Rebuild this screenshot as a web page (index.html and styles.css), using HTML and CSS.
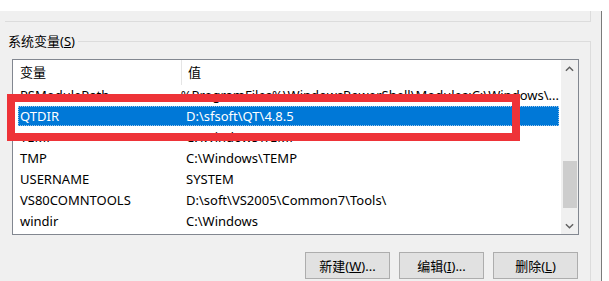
FILE: index.html
```html
<!DOCTYPE html>
<html lang="zh-CN">
<head>
  <meta charset="UTF-8">
  <title>环境变量</title>
  <link rel="stylesheet" href="styles.css">
</head>
<body>
  <div class="window">
    <!-- 上一个分组框的底边 -->
    <div class="prev-group"></div>

    <div class="group">
      <div class="legend-row">
        <span class="legend">系统变量(<u>S</u>)</span>
        <span class="legend-line"></span>
      </div>

      <div class="group-body">
        <div class="listview">
          <div class="list-main">
            <div class="list-head">
              <div class="col-name">变量</div>
              <div class="col-value">值</div>
            </div>
            <div class="row"><div class="col-name">PSModulePath</div><div class="col-value">%ProgramFiles%\WindowsPowerShell\Modules;C:\Windows\...</div></div>
            <div class="row selected"><div class="col-name">QTDIR</div><div class="col-value">D:\sfsoft\QT\4.8.5</div></div>
            <div class="row"><div class="col-name">TEMP</div><div class="col-value">C:\Windows\TEMP</div></div>
            <div class="row"><div class="col-name">TMP</div><div class="col-value">C:\Windows\TEMP</div></div>
            <div class="row"><div class="col-name">USERNAME</div><div class="col-value">SYSTEM</div></div>
            <div class="row"><div class="col-name">VS80COMNTOOLS</div><div class="col-value">D:\soft\VS2005\Common7\Tools\</div></div>
            <div class="row"><div class="col-name">windir</div><div class="col-value">C:\Windows</div></div>
          </div>

          <div class="scrollbar">
            <div class="arrow">
              <svg viewBox="0 0 10 6"><path d="M1 5 L5 1 L9 5" /></svg>
            </div>
            <div class="track">
              <div class="thumb"></div>
            </div>
            <div class="arrow">
              <svg viewBox="0 0 10 6"><path d="M1 1 L5 5 L9 1" /></svg>
            </div>
          </div>
        </div>

        <div class="buttons">
          <button class="btn">新建(<u>W</u>)...</button>
          <button class="btn">编辑(<u>I</u>)...</button>
          <button class="btn">删除(<u>L</u>)</button>
        </div>
      </div>
    </div>

    <!-- 标注框 -->
    <div class="highlight"></div>
  </div>
</body>
</html>
```

FILE: styles.css
```css
body {
  margin: 0;
  background: #fff;
  font-family: "Noto Sans", "Noto Sans CJK SC", sans-serif;
  font-size: 13px;
  color: #000;
  overflow: hidden;
}
.window {
  position: relative;
  margin-top: 11px;
  width: 601px;
  height: 270px;
  background: #f0f0f0;
  border-right: 1px solid #7a7a7a;
  overflow: hidden;
}
.prev-group {
  margin-left: 5px;
  width: 585px;
  height: 10px;
  border-bottom: 1px solid #dcdcdc;
  border-right: 1px solid #dcdcdc;
}
.group {
  width: 591px;
  margin-top: 11px;
}
.legend-row {
  display: flex;
  align-items: center;
  height: 16px;
}
.legend {
  padding: 0 3px 0 8px;
  line-height: 16px;
  white-space: nowrap;
}
.legend-line {
  flex: 1;
  align-self: flex-end;
  height: 7px;
  border-top: 1px solid #dcdcdc;
  border-right: 1px solid #dcdcdc;
}
.group-body {
  border-right: 1px solid #dcdcdc;
  padding: 10px 12px 0 12px;
  height: 240px;
}
.listview {
  display: flex;
  width: 565px;
  height: 174px;
  background: #fff;
  border: 1px solid #828790;
}
.list-main {
  flex: 1;
  overflow: hidden;
}
.list-head {
  display: flex;
  height: 25px;
  line-height: 25px;
}
.list-head .col-name {
  width: 161px;
  padding-left: 7px;
  border-right: 1px solid #e5e5e5;
}
.list-head .col-value {
  padding-left: 6px;
}
.row {
  display: flex;
  height: 21px;
  line-height: 21px;
  margin: 0 2px 0 5px;
  white-space: nowrap;
}
.row .col-name {
  width: 161px;
  padding-left: 2px;
}
.row .col-value {
  padding-left: 5px;
}
.row.selected {
  background: #0078d7;
  color: #fff;
  outline: 1px dotted #9cc6ec;
  outline-offset: -1px;
  height: 20px;
  margin-bottom: 1px;
}
.scrollbar {
  width: 17px;
  background: #f0f0f0;
  display: flex;
  flex-direction: column;
}
.arrow {
  height: 17px;
  display: flex;
  align-items: center;
  justify-content: center;
}
.arrow svg {
  width: 9px;
  height: 6px;
  fill: none;
  stroke: #606060;
  stroke-width: 1.6;
}
.track {
  flex: 1;
  padding-top: 84px;
}
.thumb {
  margin: 0 1px 0 2px;
  height: 47px;
  background: #cdcdcd;
}
.buttons {
  display: flex;
  justify-content: flex-end;
  gap: 9px;
  margin-top: 17px;
  width: 566px;
}
.btn {
  width: 85px;
  height: 27px;
  background: #e1e1e1;
  border: 1px solid #adadad;
  font-family: inherit;
  font-size: 13px;
  color: #000;
  padding: 0;
}
.highlight {
  position: absolute;
  left: 7px;
  top: 83px;
  width: 513px;
  height: 47px;
  box-sizing: border-box;
  border: 8px solid #ee3338;
}
```
